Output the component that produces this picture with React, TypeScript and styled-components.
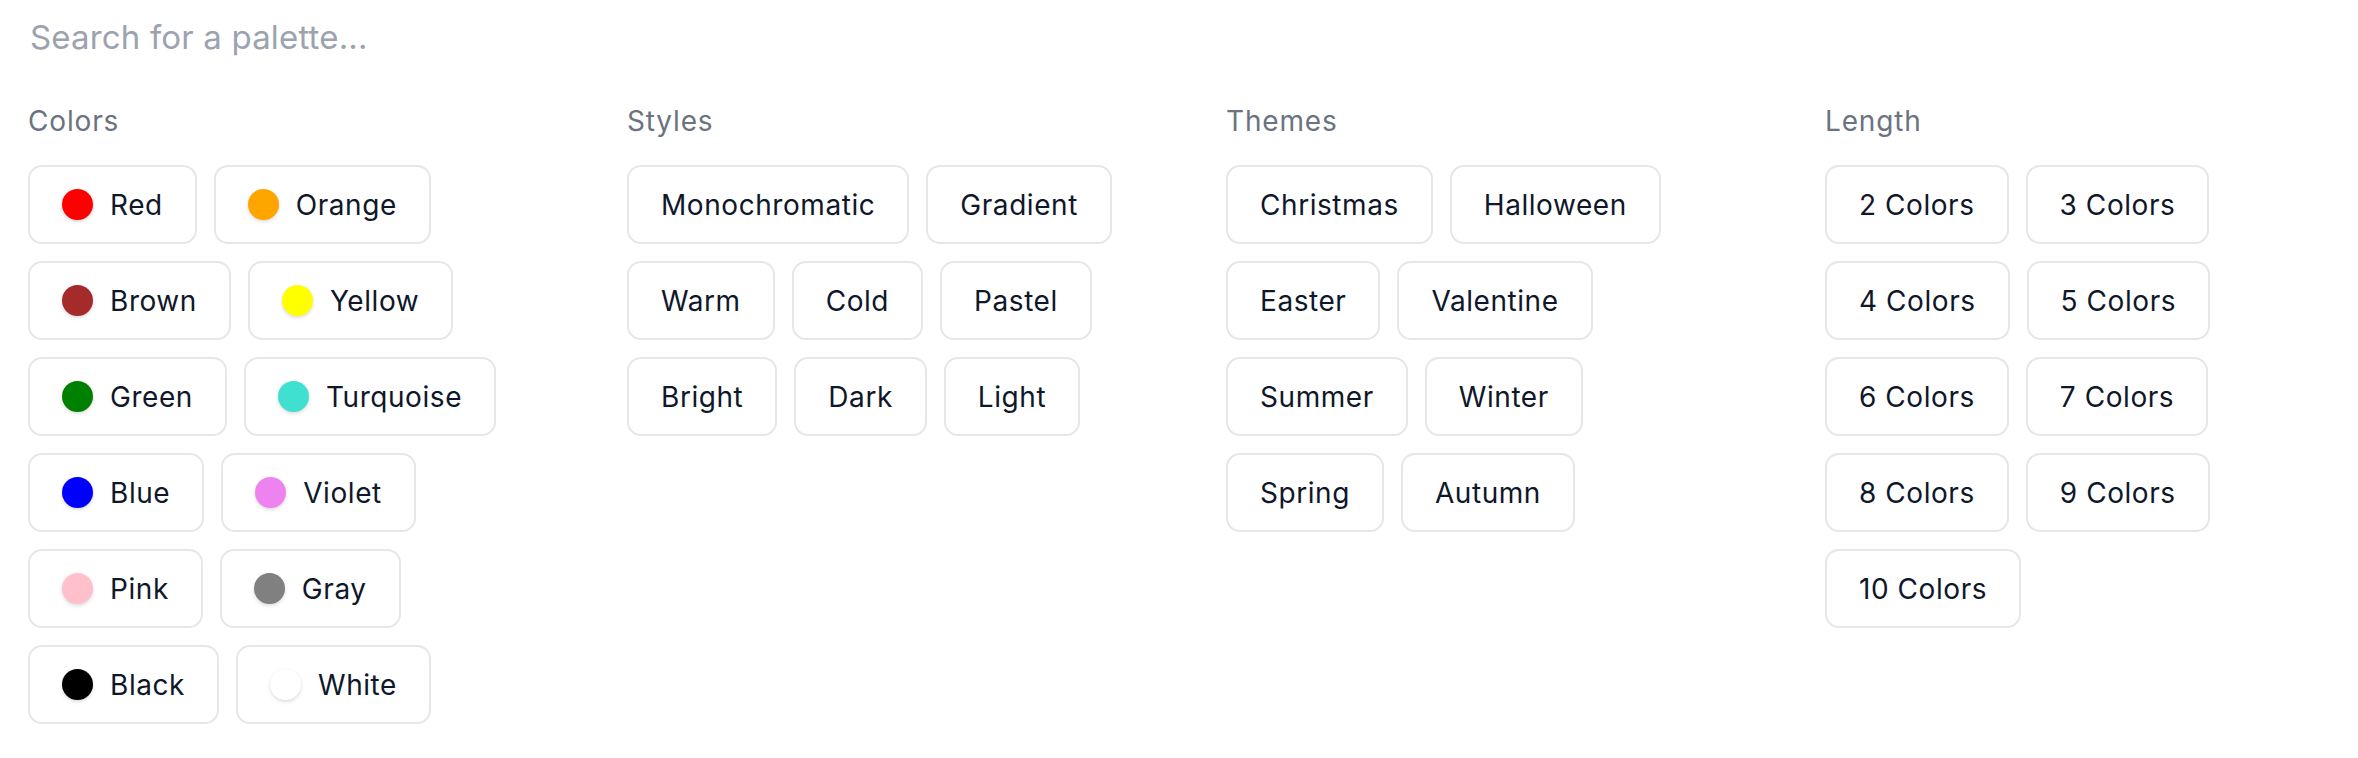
import React from "react";
import styled, { createGlobalStyle } from "styled-components";

const GlobalStyle = createGlobalStyle`
  html, body {
    margin: 0;
    padding: 0;
    background: #ffffff;
  }
  body {
    font-family: Inter, "Noto Sans", "Liberation Sans", sans-serif;
    -webkit-font-smoothing: antialiased;
  }
  * { box-sizing: border-box; }
`;

const Page = styled.div`
  width: 2358px;
  min-height: 758px;
  padding: 0 28px;
  display: flex;
  flex-direction: column;
`;

const SearchInput = styled.input`
  height: 74px;
  width: 800px;
  border: none;
  outline: none;
  background: transparent;
  padding: 0 2px;
  font-family: inherit;
  font-size: 33px;
  letter-spacing: 0.005em;
  color: #111827;
  &::placeholder {
    color: #9ca3af;
    opacity: 1;
  }
`;

const Grid = styled.div`
  margin-top: 26px;
  display: grid;
  grid-template-columns: repeat(4, 1fr);
  column-gap: 94px;
`;

const Section = styled.section`
  display: flex;
  flex-direction: column;
`;

const Heading = styled.h3`
  margin: 0 0 25px 0;
  height: 40px;
  line-height: 42px;
  font-size: 28px;
  font-weight: 400;
  color: #6b7280;
  letter-spacing: 0.03em;
`;

const Rows = styled.div`
  display: flex;
  flex-direction: column;
  gap: 17px;
`;

const Row = styled.div`
  display: flex;
  gap: 17px;
`;

const Chip = styled.button`
  height: 79px;
  display: inline-flex;
  align-items: center;
  gap: 17px;
  padding: 0 32px;
  background: #ffffff;
  border: 2px solid #e5e7eb;
  border-radius: 14px;
  font-family: inherit;
  font-size: 28px;
  font-weight: 400;
  letter-spacing: 0.02em;
  color: #0f172a;
  cursor: pointer;
  white-space: nowrap;
`;

const Dot = styled.span<{ $color: string }>`
  width: 31px;
  height: 31px;
  border-radius: 50%;
  flex: none;
  background: ${(p) => p.$color};
  box-shadow: 0 2px 4px rgba(0, 0, 0, 0.1), 0 1px 3px rgba(0, 0, 0, 0.06);
`;

type Item = { label: string; color?: string };

const colors: Item[][] = [
  [{ label: "Red", color: "red" }, { label: "Orange", color: "orange" }],
  [{ label: "Brown", color: "brown" }, { label: "Yellow", color: "yellow" }],
  [{ label: "Green", color: "green" }, { label: "Turquoise", color: "turquoise" }],
  [{ label: "Blue", color: "blue" }, { label: "Violet", color: "violet" }],
  [{ label: "Pink", color: "pink" }, { label: "Gray", color: "gray" }],
  [{ label: "Black", color: "black" }, { label: "White", color: "white" }],
];

const styles: Item[][] = [
  [{ label: "Monochromatic" }, { label: "Gradient" }],
  [{ label: "Warm" }, { label: "Cold" }, { label: "Pastel" }],
  [{ label: "Bright" }, { label: "Dark" }, { label: "Light" }],
];

const themes: Item[][] = [
  [{ label: "Christmas" }, { label: "Halloween" }],
  [{ label: "Easter" }, { label: "Valentine" }],
  [{ label: "Summer" }, { label: "Winter" }],
  [{ label: "Spring" }, { label: "Autumn" }],
];

const lengths: Item[][] = [
  [{ label: "2 Colors" }, { label: "3 Colors" }],
  [{ label: "4 Colors" }, { label: "5 Colors" }],
  [{ label: "6 Colors" }, { label: "7 Colors" }],
  [{ label: "8 Colors" }, { label: "9 Colors" }],
  [{ label: "10 Colors" }],
];

const sections: { title: string; rows: Item[][] }[] = [
  { title: "Colors", rows: colors },
  { title: "Styles", rows: styles },
  { title: "Themes", rows: themes },
  { title: "Length", rows: lengths },
];

export default function App() {
  return (
    <>
      <GlobalStyle />
      <Page>
        <SearchInput placeholder="Search for a palette..." />
        <Grid>
          {sections.map((s) => (
            <Section key={s.title}>
              <Heading>{s.title}</Heading>
              <Rows>
                {s.rows.map((row, i) => (
                  <Row key={i}>
                    {row.map((it) => (
                      <Chip key={it.label}>
                        {it.color && <Dot $color={it.color} />}
                        {it.label}
                      </Chip>
                    ))}
                  </Row>
                ))}
              </Rows>
            </Section>
          ))}
        </Grid>
      </Page>
    </>
  );
}
